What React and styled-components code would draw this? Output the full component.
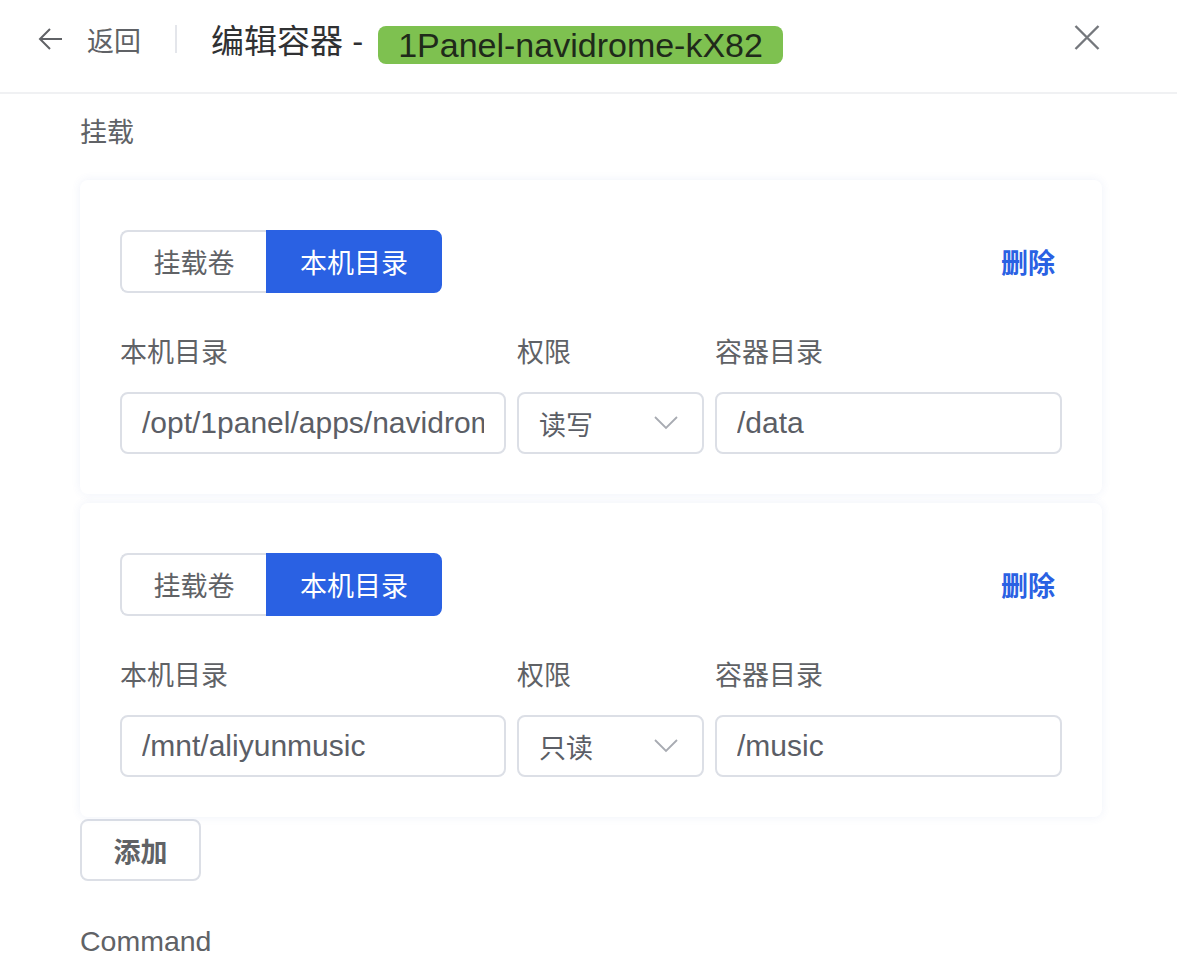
import React from 'react';
import styled, { createGlobalStyle } from 'styled-components';

const GlobalStyle = createGlobalStyle`
    body {
        margin: 0;
        background: #fff;
        font-family: "Liberation Sans", "Noto Sans CJK SC", sans-serif;
    }
`;

const Page = styled.div`
    width: 1177px;
    height: 968px;
    overflow: hidden;
    background: #fff;
`;

const Header = styled.div`
    display: flex;
    align-items: center;
    height: 78px;
    padding: 0 77px 14px 38px;
    border-bottom: 2px solid #f0f1f3;
`;

const BackLink = styled.div`
    display: flex;
    align-items: center;
    gap: 24px;
    color: #606266;
    font-size: 27px;
`;

const Divider = styled.div`
    width: 2px;
    height: 28px;
    background: #e4e6eb;
    margin: 0 34px 0 34px;
`;

const Title = styled.div`
    display: flex;
    align-items: center;
    font-size: 33px;
    color: #303133;
    flex: 1;
`;

const Tag = styled.span`
    margin-left: 15px;
    margin-top: 12px;
    height: 38px;
    line-height: 38px;
    padding: 0 20px;
    border-radius: 8px;
    background: #7ec150;
    color: #1f2a1a;
    font-size: 34px;
`;

const CloseButton = styled.div`
    display: flex;
    color: #74777c;
    margin-top: -4px;
`;

const Body = styled.div`
    padding: 0 75px 0 80px;
`;

const SectionLabel = styled.div`
    font-size: ${p => p.$size || 27}px;
    line-height: 40px;
    color: #606266;
    margin-top: ${p => p.$top}px;
`;

const MountList = styled.div`
    display: flex;
    flex-direction: column;
    gap: 9px;
    margin-top: 27px;
`;

const Card = styled.div`
    padding: 50px 40px 40px;
    border-radius: 8px;
    background: #fff;
    box-shadow: 0 0 10px rgba(70, 100, 190, 0.09);
`;

const TopRow = styled.div`
    display: flex;
    align-items: center;
    justify-content: space-between;
`;

const RadioGroup = styled.div`
    display: flex;
`;

const RadioButton = styled.div`
    height: 63px;
    box-sizing: border-box;
    display: flex;
    align-items: center;
    justify-content: center;
    width: ${p => p.$w}px;
    font-size: 27px;
    color: ${p => (p.$active ? '#fff' : '#606266')};
    background: ${p => (p.$active ? '#2a61e3' : '#fff')};
    border: 2px solid ${p => (p.$active ? '#2a61e3' : '#dcdfe6')};
    &:first-child {
        border-radius: 8px 0 0 8px;
        border-right: none;
    }
    &:last-child {
        border-radius: 0 8px 8px 0;
    }
`;

const DeleteLink = styled.div`
    color: #2a61e3;
    font-size: 27px;
    font-weight: 600;
    margin-right: 7px;
`;

const FieldGrid = styled.div`
    display: grid;
    grid-template-columns: 386px 187px 1fr;
    column-gap: 11px;
    row-gap: 19px;
    margin-top: 40px;
`;

const FieldLabel = styled.div`
    font-size: 27px;
    line-height: 40px;
    color: #606266;
`;

const InputBox = styled.div`
    height: 62px;
    box-sizing: border-box;
    border: 2px solid #dcdfe6;
    border-radius: 8px;
    display: flex;
    align-items: center;
    gap: 12px;
    padding: 0 ${p => (p.$select ? 24 : 20)}px 0 20px;
    font-size: 30px;
    color: #5b5e66;
`;

const InputText = styled.span`
    flex: 1;
    min-width: 0;
    overflow: hidden;
    white-space: nowrap;
    font-size: ${p => (p.$cjk ? 27 : 30)}px;
`;

const Chevron = styled.span`
    display: flex;
    color: #a8abb2;
`;

const AddButton = styled.div`
    margin-top: 2px;
    width: 121px;
    height: 62px;
    box-sizing: border-box;
    border: 2px solid #dcdfe6;
    border-radius: 8px;
    display: flex;
    align-items: center;
    justify-content: center;
    font-size: 27px;
    font-weight: 600;
    color: #606266;
`;

const ArrowLeft = () => (
    <svg width="25" height="24" viewBox="0 0 25 24" fill="none" stroke="currentColor" strokeWidth="2">
        <path d="M24 12H2M12 2L2 12l10 10" />
    </svg>
);

const CloseIcon = () => (
    <svg width="26" height="25" viewBox="0 0 26 25" fill="none" stroke="currentColor" strokeWidth="2.4">
        <path d="M1.5 1l23 23M24.5 1l-23 23" />
    </svg>
);

const ChevronDown = () => (
    <svg width="24" height="14" viewBox="0 0 24 14" fill="none" stroke="currentColor" strokeWidth="1.8">
        <path d="M1 1l11 11L23 1" />
    </svg>
);

const mounts = [
    { host: '/opt/1panel/apps/navidrome/data', mode: '读写', target: '/data' },
    { host: '/mnt/aliyunmusic', mode: '只读', target: '/music' },
];

const MountCard = ({ mount }) => (
    <Card>
        <TopRow>
            <RadioGroup>
                <RadioButton $w={146}>挂载卷</RadioButton>
                <RadioButton $w={176} $active>本机目录</RadioButton>
            </RadioGroup>
            <DeleteLink>删除</DeleteLink>
        </TopRow>
        <FieldGrid>
            <FieldLabel>本机目录</FieldLabel>
            <FieldLabel>权限</FieldLabel>
            <FieldLabel>容器目录</FieldLabel>
            <InputBox>
                <InputText>{mount.host}</InputText>
            </InputBox>
            <InputBox $select>
                <InputText $cjk>{mount.mode}</InputText>
                <Chevron><ChevronDown /></Chevron>
            </InputBox>
            <InputBox>
                <InputText>{mount.target}</InputText>
            </InputBox>
        </FieldGrid>
    </Card>
);

export default function App() {
    return (
        <Page>
            <GlobalStyle />
            <Header>
                <BackLink>
                    <ArrowLeft />
                    <span>返回</span>
                </BackLink>
                <Divider />
                <Title>
                    编辑容器 -
                    <Tag>1Panel-navidrome-kX82</Tag>
                </Title>
                <CloseButton><CloseIcon /></CloseButton>
            </Header>
            <Body>
                <SectionLabel $top={19}>挂载</SectionLabel>
                <MountList>
                    {mounts.map((m, i) => (
                        <MountCard key={i} mount={m} />
                    ))}
                </MountList>
                <AddButton>添加</AddButton>
                <SectionLabel $top={40} $size={28.5}>Command</SectionLabel>
            </Body>
        </Page>
    );
}
